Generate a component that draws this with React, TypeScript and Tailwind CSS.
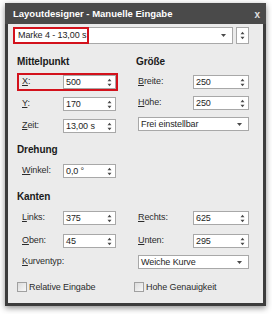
import React from 'react'

const SpinArrows = () => (
  <svg width="5" height="9" viewBox="0 0 5 9" className="shrink-0">
    <path d="M2.5 0.8 L4.5 3.2 H0.5 Z M0.5 5.8 H4.5 L2.5 8.2 Z" fill="#4a4a4a" />
  </svg>
)

const DropArrow = () => (
  <svg width="5" height="3" viewBox="0 0 5 3" className="shrink-0">
    <path d="M0 0 H5 L2.5 3 Z" fill="#4a4a4a" />
  </svg>
)

function SpinBox({ value, className }: { value: string; className: string }) {
  return (
    <div className={`${className} h-[14px] bg-white border border-[#a8a8a8] flex items-center justify-between pl-[2px] pr-[3px] text-[#1e1e1e]`}>
      <span className="leading-none whitespace-nowrap">{value}</span>
      <SpinArrows />
    </div>
  )
}

function Combo({ value, className }: { value: string; className: string }) {
  return (
    <div className={`${className} h-[14px] bg-white border border-[#a8a8a8] flex items-center justify-between pl-[2px] pr-[6px] text-[#1e1e1e]`}>
      <span className="leading-none whitespace-nowrap">{value}</span>
      <DropArrow />
    </div>
  )
}

function Label({ k, rest }: { k: string; rest: string }) {
  return (
    <span className="leading-none text-[#2b2b2b] whitespace-nowrap">
      <span className="underline underline-offset-1">{k}</span>
      {rest}
    </span>
  )
}

function LeftField({ k, rest, value, highlight }: { k: string; rest: string; value: string; highlight?: boolean }) {
  return (
    <div className={`flex items-center h-[18px] w-[101px] border-2 pl-[3px] ${highlight ? 'border-[#d3121c]' : 'border-transparent'}`}>
      <div className="w-[41px]">
        <Label k={k} rest={rest} />
      </div>
      <SpinBox value={value} className="w-[53px]" />
    </div>
  )
}

function RightField({ k, rest, value }: { k: string; rest: string; value: string }) {
  return (
    <div className="flex items-center h-[18px] pl-[2px]">
      <div className="w-[55px]">
        <Label k={k} rest={rest} />
      </div>
      <SpinBox value={value} className="w-[56px]" />
    </div>
  )
}

function Heading({ children }: { children: React.ReactNode }) {
  return <div className="h-[12px] leading-[12px] font-bold text-[10px] text-[#1a1a1a] whitespace-nowrap">{children}</div>
}

function Check({ text }: { text: string }) {
  return (
    <div className="flex items-center gap-[2px]">
      <div className="w-[10px] h-[10px] border border-[#a0a0a0] bg-gradient-to-br from-[#dcdcdc] to-[#f8f8f8]" />
      <span className="leading-none text-[#2b2b2b] whitespace-nowrap">{text}</span>
    </div>
  )
}

export default function App() {
  return (
    <div className="w-[272px] h-[314px] bg-white pl-[5px] pt-[3px] text-[9px] tracking-[-0.1px] font-['Liberation_Sans',Arial,sans-serif]">
      <div className="w-[261px] h-[303px] bg-[#3c3c3c] flex flex-col px-[3px] pb-[3px] shadow-[0_2px_6px_rgba(0,0,0,0.45)]">
        {/* title bar */}
        <div className="h-[21px] shrink-0 flex items-center justify-between pt-[2px] bg-[#4a4a4a] -mx-[3px] pl-[8px] pr-[6px] tracking-normal">
          <span className="text-white font-bold text-[9.5px] whitespace-nowrap">Layoutdesigner - Manuelle Eingabe</span>
          <span className="text-[#e0e0e0] font-bold text-[10px]">x</span>
        </div>

        <div className="flex-1 bg-[#ebebeb] pl-[5px] pt-[3px] flex flex-col">
          {/* marker selection */}
          <div className="flex h-[17px] gap-[3px]">
            <div className="w-[220px] h-[17px] bg-white border border-[#a8a8a8] flex items-center justify-between pr-[6px]">
              <div className="h-[17px] w-[76px] -m-px border-2 border-[#d3121c] flex items-center pl-[3px]">
                <span className="leading-none text-[#1e1e1e] whitespace-nowrap">Marke 4 - 13,00 s</span>
              </div>
              <DropArrow />
            </div>
            <div className="w-[13px] h-[17px] bg-white border border-[#a8a8a8] flex items-center justify-center">
              <SpinArrows />
            </div>
          </div>

          {/* Mittelpunkt / Größe */}
          <div className="flex mt-[12px] pl-[4px]">
            <div className="w-[119px] flex flex-col">
              <Heading>Mittelpunkt</Heading>
              <div className="mt-[5px] flex flex-col gap-[4px]">
                <LeftField k="X" rest=":" value="500" highlight />
                <LeftField k="Y" rest=":" value="170" />
                <LeftField k="Z" rest="eit:" value="13,00 s" />
              </div>
            </div>
            <div className="w-[113px] flex flex-col">
              <Heading>Größe</Heading>
              <div className="mt-[5px] flex flex-col gap-[3px]">
                <RightField k="B" rest="reite:" value="250" />
                <RightField k="H" rest="öhe:" value="250" />
                <div className="h-[18px] flex items-center pl-[2px]">
                  <Combo value="Frei einstellbar" className="w-[111px]" />
                </div>
              </div>
            </div>
          </div>

          {/* Drehung */}
          <div className="mt-[9px] pl-[4px] flex flex-col">
            <Heading>Drehung</Heading>
            <div className="mt-[6px]">
              <LeftField k="W" rest="inkel:" value="0,0 °" />
            </div>
          </div>

          {/* Kanten */}
          <div className="mt-[11px] pl-[4px] flex flex-col">
            <Heading>Kanten</Heading>
            <div className="mt-[6px] flex flex-col gap-[5px]">
              <div className="flex">
                <div className="w-[119px]">
                  <LeftField k="L" rest="inks:" value="375" />
                </div>
                <RightField k="R" rest="echts:" value="625" />
              </div>
              <div className="flex">
                <div className="w-[119px]">
                  <LeftField k="O" rest="ben:" value="45" />
                </div>
                <RightField k="U" rest="nten:" value="295" />
              </div>
            </div>
            <div className="mt-[3px] flex h-[18px] items-center">
              <div className="w-[119px] pl-[5px]">
                <Label k="K" rest="urventyp:" />
              </div>
              <div className="pl-[2px]">
                <Combo value="Weiche Kurve" className="w-[111px]" />
              </div>
            </div>
          </div>

          {/* options */}
          <div className="mt-[10px] pl-[4px] flex h-[12px] items-center">
            <div className="w-[117px]">
              <Check text="Relative Eingabe" />
            </div>
            <Check text="Hohe Genauigkeit" />
          </div>
        </div>
      </div>
    </div>
  )
}
